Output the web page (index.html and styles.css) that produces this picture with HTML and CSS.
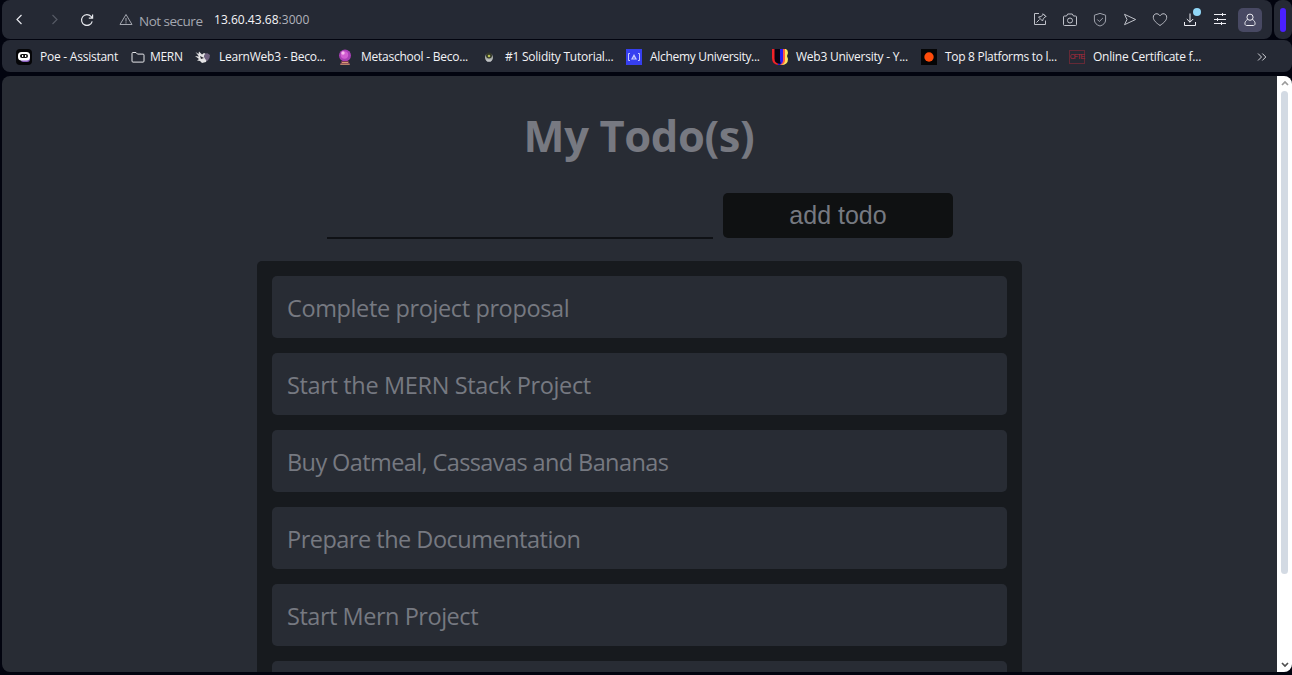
FILE: index.html
```html
<!DOCTYPE html>
<html lang="en">
<head>
<meta charset="utf-8">
<title>My Todo(s)</title>
<link rel="stylesheet" href="styles.css">
</head>
<body>
<div class="top">
  <header class="toolbar">
    <nav class="nav">
      <svg class="icon" viewBox="0 0 16 16"><path d="M10.500 3 6 7.500l4.500 4.500"/></svg>
      <svg class="icon faded" viewBox="0 0 16 16"><path d="m7.500 3 4.500 4.500L7.500 12"/></svg>
      <svg class="icon reload" viewBox="0 0 16 16"><path d="M13.200 9.300A5.400 5.400 0 1 1 12 4.400L13.400 6M13.600 2.400V6.200H9.800"/></svg>
    </nav>
    <div class="address">
      <svg class="icon warn" viewBox="0 0 16 16"><path d="M8 2.500 14 12.500H2ZM8 6v3.600M8 10.300v1.200"/></svg>
      <span class="security">Not secure</span>
      <span class="host">13.60.43.68<span class="port">:3000</span></span>
    </div>
    <div class="actions">
      <svg class="icon" viewBox="0 0 16 16"><path d="M7 1.500H2.500v11h11V8.500M4.500 10.500l3-3M6.500 5l4 4M6.500 5l2.800-.5L11.300 2l2.500 2.500-2.400 2-.9 2.500M10.800 1.500l3.400 3.400"/></svg>
      <svg class="icon" viewBox="0 0 16 16"><path d="M2.500 4H4.500l1.200-2h4.600l1.200 2h2a1 1 0 0 1 1 1v7.500a1 1 0 0 1-1 1h-11a1 1 0 0 1-1-1V5a1 1 0 0 1 1-1Z"/><circle cx="8" cy="8.500" r="2.500"/></svg>
      <svg class="icon dim" viewBox="0 0 16 16"><path d="M8 1.400 13.600 3.200V8c0 3-2.300 5-5.600 6C4.700 13 2.400 11 2.400 8V3.200ZM5.300 7.500l2 2 3.600-3.500"/></svg>
      <svg class="icon" viewBox="0 0 16 16"><path d="M2.500 2.300 13.600 7.500 2.500 12.700 5 7.500Z"/></svg>
      <svg class="icon" viewBox="0 0 16 16"><path d="M8 13.500C4.500 11 1.300 8.500 1.300 5.300 1.300 1.300 6 .5 8 3.800 10 .5 14.700 1.300 14.700 5.300 14.700 8.500 11.500 11 8 13.500Z"/></svg>
      <span class="download">
        <svg class="icon bright" viewBox="0 0 16 16"><path d="M8 1.500v8.700M4.800 7 8 10.200 11.200 7M2.500 10v3.500h11V10"/></svg>
        <i class="dot"></i>
      </span>
      <svg class="icon bright" viewBox="0 0 16 16"><path d="M2 2.500h12M2 7.500h12M2 11.500h12M10.500 1v3M5.500 6v3M9.500 10v3"/></svg>
      <span class="profile"><svg class="icon bright" viewBox="0 0 16 16"><circle cx="8" cy="5.200" r="3.100"/><path d="M5.700 7.500C2.200 9 2.300 13.500 4.500 13.500h7c2.200 0 2.300-4.500-1.200-6"/></svg></span>
    </div>
  </header>
  <div class="side"><i></i></div>
</div>
<div class="bookmarks">
  <a class="mark poe"><svg viewBox="0 0 16 16"><rect width="16" height="16" rx="4" fill="#050507"/><rect x="4.500" y="6" width="9.500" height="7" rx="3" fill="#8b5fc0"/><rect x="2" y="3" width="12" height="8.500" rx="3.500" fill="#fff"/><rect x="4" y="5" width="8" height="4" rx="2" fill="#111"/><path d="M6 6h1.200v2H6zM9 6h1.200v2H9z" fill="#fff"/></svg><span>Poe - Assistant</span></a>
  <a class="mark mern"><svg class="folder" viewBox="0 0 14 16"><path d="M1 4.500q0-1 1-1h3l1.500 1.600H12q1 0 1 1v6q0 1-1 1H2q-1 0-1-1Z" fill="none" stroke="#e4e5e8"/></svg><span>MERN</span></a>
  <a class="mark learn"><svg viewBox="0 0 16 16"><path d="M.5 3 3.500 5 4 2.500l3 3L9 4l2 1-2 3 3 2-1 3-4 1-2-2-3-.5 2-1.500L0 7l4 .5Z" fill="#e4e3e5"/><path d="m9 6 3-2 3 2-.5 3-2 3-2.500-2Z" fill="#6e607e"/><path d="m5 7 4 2-3 1Z" fill="#282631"/></svg><span>LearnWeb3 - Beco...</span></a>
  <a class="mark meta"><svg viewBox="0 0 16 16"><circle cx="8" cy="6.500" r="6" fill="#a83fb5"/><circle cx="7.500" cy="6" r="3.700" fill="#d25ed2"/><circle cx="6" cy="4" r="1.700" fill="#f6b6ec"/><path d="M4.300 12h7.400l1 3.500H3.300Z" fill="#7b3b52"/><path d="M5 13h6v1H5zM3.300 14.800h9.400v1H3.300z" fill="#d99b77"/></svg><span>Metaschool - Beco...</span></a>
  <a class="mark sol"><svg viewBox="0 0 16 16"><ellipse cx="8" cy="8.500" rx="4" ry="4.300" fill="#a9adab"/><circle cx="8" cy="6.500" r="3" fill="#34382b"/><circle cx="8" cy="7" r="1.300" fill="#b5bd54"/><path d="M5 10.500h6l-1 2H6Z" fill="#c0c2c5"/></svg><span>#1 Solidity Tutorial...</span></a>
  <a class="mark alch"><svg viewBox="0 0 16 16"><path d="M0 0h16v16H0z" fill="#363ff0"/><path d="M4 4.500H2.500v7H4M12 4.500h1.500v7H12" fill="none" stroke="#c3c7ff"/><path d="m8 5 3 5.500H5Z" fill="#c8ccff"/><path d="m8 8 1 1.500H7Z" fill="#363ff0"/></svg><span>Alchemy University...</span></a>
  <a class="mark web"><svg viewBox="0 0 16 16"><path d="M0 0h4v10q0 3 3 6Q0 16 0 9Z" fill="#f22228"/><path d="M11 0h3q2 1 2 4l-1 3 1 3q0 6-7 6Z" fill="#ffe45c"/><path d="M10 0h3v12q-1 4-5 4Z" fill="#ff5c45"/><path d="M6 0h5v12q-1 4-5 4Z" fill="#291cf0"/><path d="M2.500 0H8v11q0 2 1 3.500-6.500 1-6.500-5Z" fill="#080414"/></svg><span>Web3 University - Y...</span></a>
  <a class="mark plat"><svg viewBox="0 0 16 16"><path d="M0 0h16v16H0z" fill="#050506"/><circle cx="8" cy="8" r="4.700" fill="#ff4b0b"/></svg><span>Top 8 Platforms to l...</span></a>
  <a class="mark cert"><span class="cfte">CFTE</span><span>Online Certificate f...</span></a>
  <svg class="more" viewBox="0 0 10 10"><path d="m1 1.500 3.500 3.500L1 8.500M5.300 1.500 8.800 5 5.300 8.500"/></svg>
</div>
<div class="viewport">
  <main class="page">
    <h1>My Todo(s)</h1>
    <form class="entry">
      <input type="text" aria-label="Todo">
      <button type="button">add todo</button>
    </form>
    <ul class="todos">
      <li class="t1">Complete project proposal</li>
      <li class="t2">Start the MERN Stack Project</li>
      <li class="t3">Buy Oatmeal, Cassavas and Bananas</li>
      <li class="t4">Prepare the Documentation</li>
      <li class="t5">Start Mern Project</li>
      <li></li>
    </ul>
  </main>
  <div class="scrollbar">
    <svg viewBox="0 0 8 6"><path d="m1 5 3-3 3 3" stroke="#9b9b9b"/></svg>
    <i class="thumb"></i>
    <svg class="down" viewBox="0 0 8 6"><path d="m1 1 3 3 3-3" stroke="#505050"/></svg>
  </div>
</div>
</body>
</html>
```
FILE: styles.css
```css
* { box-sizing: border-box; }
body {
  margin: 0;
  height: 675px;
  overflow: hidden;
  display: flex;
  flex-direction: column;
  background: #02040f;
  font-family: "Open Sans", "Noto Sans", sans-serif;
}
svg { display: block; flex: none; }
.top { display: flex; height: 39px; flex: none; padding-left: 2px; gap: 2px; }
.toolbar {
  width: 1270px;
  display: flex;
  align-items: center;
  background: #252934;
  border-radius: 8px;
  padding: 0 10px 0 9px;
}
.side {
  width: 18px;
  background: #252934;
  border-radius: 8px;
  display: flex;
  align-items: center;
  justify-content: center;
}
.side i { width: 6px; height: 24px; border-radius: 3px; background: #4b20ff; }
.icon { width: 16px; height: 16px; fill: none; stroke: #bfc1c9; stroke-width: 1; }
.faded { stroke: #555964; }
.dim { stroke: #a0a3ad; }
.bright { stroke: #eeeef4; }
.nav { display: flex; gap: 18px; }
.nav .icon { stroke-width: 1.2; }
.nav .icon:first-child, .reload { stroke: #e6e7ec; }
.address { display: flex; align-items: center; margin-left: 23px; }
.warn { stroke: #a4a7b0; }
.security { width: 75px; margin-left: 5px; padding-top: 3px; font-size: 13.5px; letter-spacing: -.5px; color: #a4a7b0; white-space: nowrap; }
.host { font-size: 12px; letter-spacing: .02px; color: #f5f5f8; white-space: nowrap; }
.port { color: #b1b3bc; }
.actions { display: flex; align-items: center; gap: 14px; margin-left: auto; }
.download { position: relative; }
.download .icon { margin-top: 0; }
.dot { position: absolute; top: -4px; left: 11px; width: 8px; height: 8px; border-radius: 50%; background: #91d7f7; }
.download { height: 16px; }
.profile { width: 24px; height: 24px; margin-left: -4px; border-radius: 5px; background: #484963; display: grid; place-items: center; }
.bookmarks {
  height: 32px;
  flex: none;
  margin: 1px 0 0 2px;
  padding-left: 14px;
  display: flex;
  align-items: center;
  background: #252934;
  border-radius: 8px;
}
.mark { display: flex; align-items: center; gap: 8px; color: #f3f3f6; font-size: 12px; line-height: 16px; white-space: nowrap; letter-spacing: -.24px; padding-top: 1px; }
.mark > span:last-child { padding-top: 1px; }
.mark svg { width: 16px; height: 16px; }
.mark .folder { width: 14px; }
.mern { gap: 5px; letter-spacing: -.3px; }
.alch { letter-spacing: -.3px; }
.poe { width: 115px; }
.mern { width: 64px; }
.learn { width: 142px; }
.meta { width: 144px; }
.sol { width: 145px; }
.alch { width: 146px; }
.web { width: 149px; }
.plat { width: 148px; letter-spacing: -.3px; }
.cert { width: 188px; }
.cfte { width: 16px; height: 14px; border: 1px solid #652936; color: #b12a3c; font: 7px/12px "Liberation Sans", sans-serif; letter-spacing: -.9px; display: flex; justify-content: center; }
.more { width: 10px; height: 10px; fill: none; stroke: #d2d3d9; margin-top: 1px; }
.viewport { height: 596px; flex: none; margin: 4px 0 0 2px; display: flex; overflow: hidden; border-radius: 8px; background: #282c34; }
.page { width: 1275px; height: 596px; overflow: hidden; color: #767981; }
h1 { margin: 30px 0 27px; text-align: center; font-size: 43.5px; line-height: 60px; font-weight: 700; letter-spacing: -.38px; text-indent: -1px; color: #777981; }
.entry { display: flex; width: 626px; height: 46px; margin: 0 auto 22px; gap: 10px; align-items: flex-start; }
.entry input { width: 386px; height: 46px; padding: 0; border: 0; border-bottom: 2px solid #0f1115; background: transparent; outline: 0; }
.entry button { width: 230px; height: 45px; padding: 0 0 0 1px; border: 0; border-radius: 5px; background: #0f1112; color: #767981; font: 25px "Liberation Sans", sans-serif; }
.todos { list-style: none; width: 765px; margin: 0 auto; padding: 15px; display: grid; gap: 15px; background: #171a1e; border-radius: 5px; }
.todos li { height: 62px; padding: 1px 15px 0; border-radius: 5px; background: #282c34; font-size: 23.5px; line-height: 62px; white-space: nowrap; }
.t1 { letter-spacing: -.38px; }
.t2 { letter-spacing: -.35px; }
.t3 { letter-spacing: -.6px; }
.t4 { letter-spacing: -.5px; }
.t5 { letter-spacing: -.47px; }
.scrollbar { width: 15px; background: #fff; display: flex; flex-direction: column; align-items: center; padding: 4px 0; }
.scrollbar svg { width: 8px; height: 6px; fill: none; stroke-width: 1.7; }
.thumb { width: 7px; height: 483px; margin-top: 5px; border-radius: 4px; background: #d3dae3; }
.down { margin-top: auto; }
```
